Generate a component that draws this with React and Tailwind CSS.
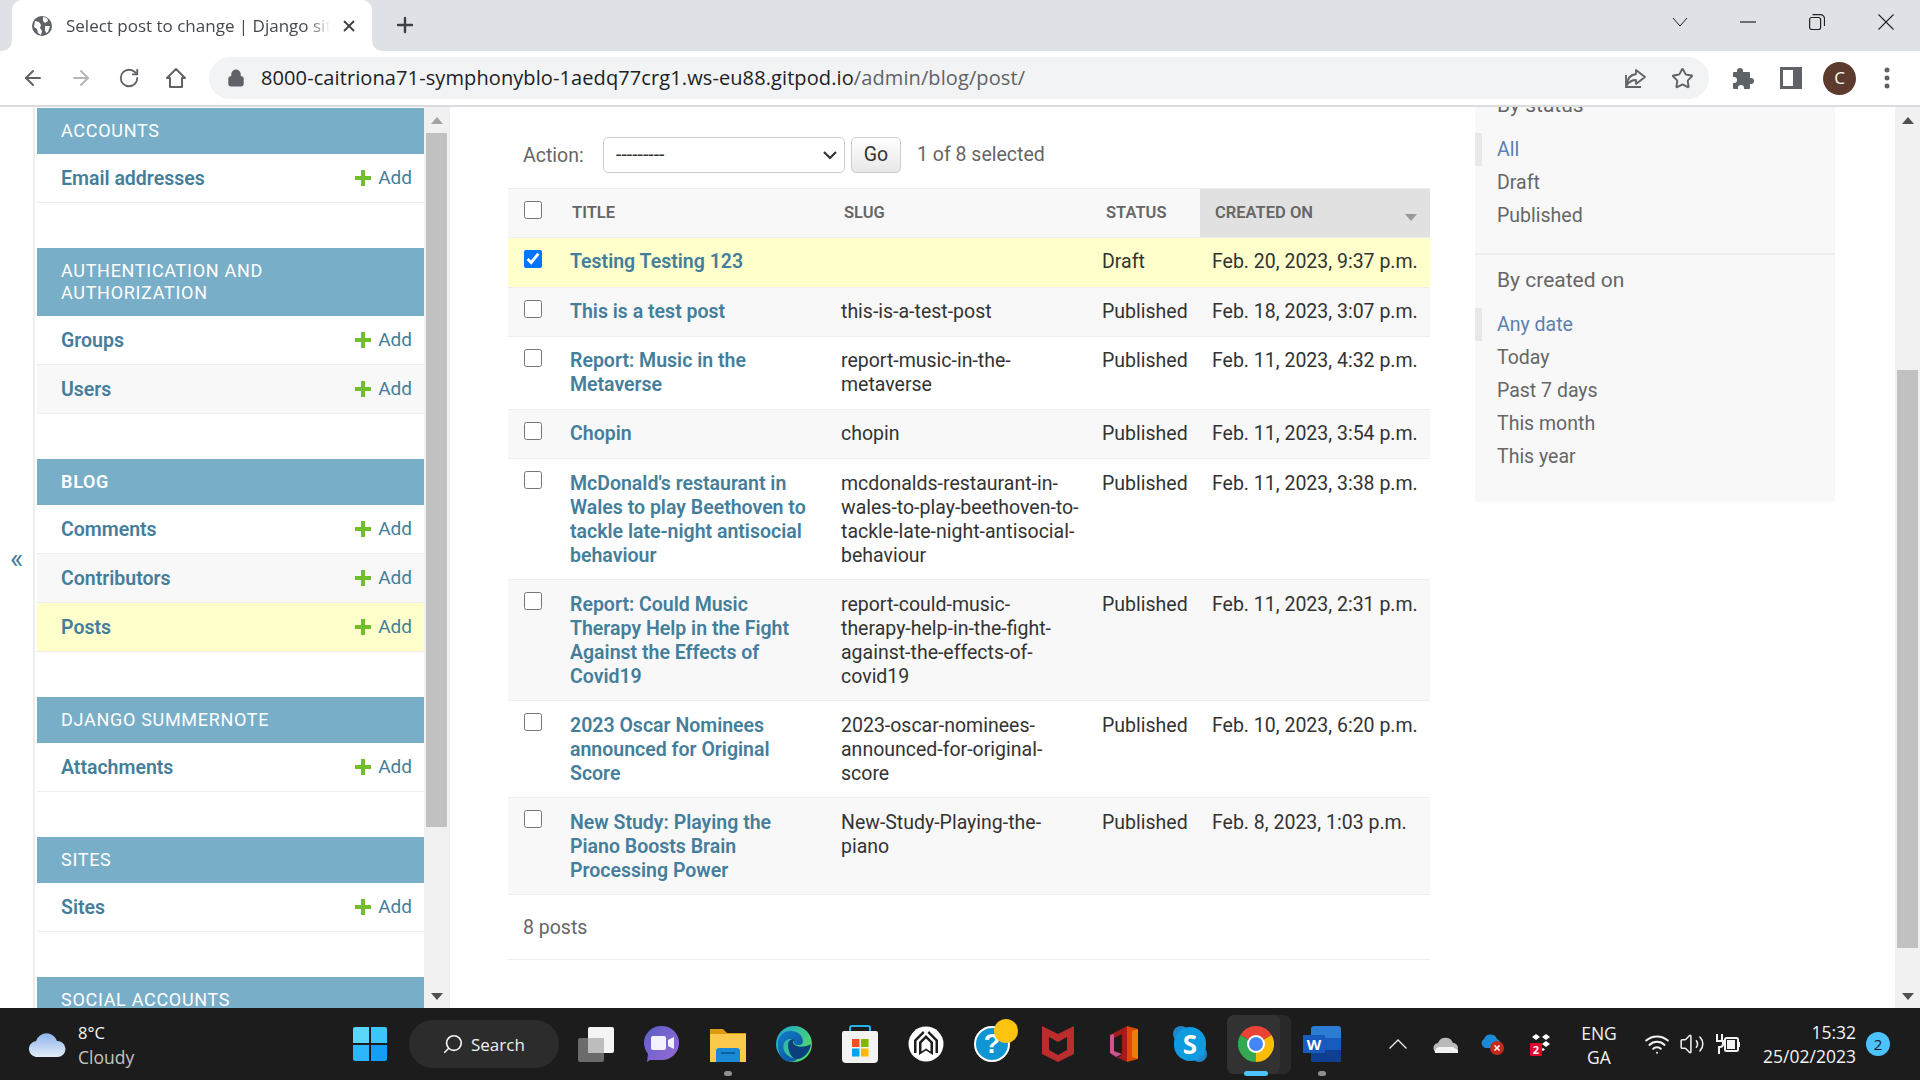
import React from 'react';
import { ArrowLeft, ArrowRight, RotateCw, Lock, Star, Plus, X, Search, Wifi, Volume2 } from 'lucide-react';

const Add = () => (
  <span className="flex items-center gap-[7px] text-[#447e9b] font-normal text-[19px]">
    <svg width="16" height="16" viewBox="0 0 16 16"><path d="M6 0h4v6h6v4h-6v6H6v-6H0V6h6z" fill="#70bf2b" /></svg>
    Add
  </span>
);

const Row = ({ name, bg = 'bg-white' }) => (
  <div className={`${bg} h-[49px] pl-[24px] pr-[12px] flex items-center justify-between border-b border-[#eeeeee] font-semibold text-[#447e9b]`}>
    <span className="pt-[2px]">{name}</span>
    <Add />
  </div>
);

const Mod = ({ title, rows, bold }) => (
  <div className="mb-[45px]">
    <div className={`bg-[#79aec8] text-white px-[24px] py-[12px] leading-[22px] text-[18px] tracking-[0.7px] uppercase ${bold ? 'font-semibold' : 'font-normal'}`}>
      {title.map((t) => <div key={t}>{t}</div>)}
    </div>
    {rows}
  </div>
);

const Tri = ({ up, color }) => (
  <svg width="12" height="7" viewBox="0 0 12 7"><path d={up ? 'M6 0l6 7H0z' : 'M0 0h12L6 7z'} fill={color} /></svg>
);

const posts = [
  { t: ['Testing Testing 123'], s: [''], st: 'Draft', d: 'Feb. 20, 2023, 9:37 p.m.', bg: 'bg-[#ffffcc]', c: true },
  { t: ['This is a test post'], s: ['this-is-a-test-post'], st: 'Published', d: 'Feb. 18, 2023, 3:07 p.m.', bg: 'bg-[#f8f8f8]' },
  { t: ['Report: Music in the', 'Metaverse'], s: ['report-music-in-the-', 'metaverse'], st: 'Published', d: 'Feb. 11, 2023, 4:32 p.m.', bg: 'bg-white' },
  { t: ['Chopin'], s: ['chopin'], st: 'Published', d: 'Feb. 11, 2023, 3:54 p.m.', bg: 'bg-[#f8f8f8]' },
  { t: ["McDonald's restaurant in", 'Wales to play Beethoven to', 'tackle late-night antisocial', 'behaviour'], s: ['mcdonalds-restaurant-in-', 'wales-to-play-beethoven-to-', 'tackle-late-night-antisocial-', 'behaviour'], st: 'Published', d: 'Feb. 11, 2023, 3:38 p.m.', bg: 'bg-white' },
  { t: ['Report: Could Music', 'Therapy Help in the Fight', 'Against the Effects of', 'Covid19'], s: ['report-could-music-', 'therapy-help-in-the-fight-', 'against-the-effects-of-', 'covid19'], st: 'Published', d: 'Feb. 11, 2023, 2:31 p.m.', bg: 'bg-[#f8f8f8]' },
  { t: ['2023 Oscar Nominees', 'announced for Original', 'Score'], s: ['2023-oscar-nominees-', 'announced-for-original-', 'score'], st: 'Published', d: 'Feb. 10, 2023, 6:20 p.m.', bg: 'bg-white' },
  { t: ['New Study: Playing the', 'Piano Boosts Brain', 'Processing Power'], s: ['New-Study-Playing-the-', 'piano'], st: 'Published', d: 'Feb. 8, 2023, 1:03 p.m.', bg: 'bg-[#f8f8f8]' },
];

const Lines = ({ l }) => l.map((x, i) => <div key={i}>{x}</div>);

const Filter = ({ items }) => (
  <div>
    {items.map((x, i) => (
      <div key={x} className={`h-[33px] leading-[33px] pl-[15px] border-l-[7px] ${i === 0 ? 'border-[#e8e8e8] text-[#5b80b2]' : 'border-transparent text-[#666666]'}`}>{x}</div>
    ))}
  </div>
);

const Tile = ({ children, className = '' }) => (
  <div className={`w-[66px] h-[72px] flex items-center justify-center relative shrink-0 ${className}`}>{children}</div>
);

const Dot = ({ blue }) => (
  <span className={`absolute bottom-[4px] left-1/2 -translate-x-1/2 h-[5px] rounded-full ${blue ? 'w-[24px] bg-[#4cc2ff]' : 'w-[8px] bg-[#8e8e8e]'}`} />
);

const WinLogo = () => (
  <svg width="36" height="36" viewBox="0 0 36 36">
    <path d="M1 3a2 2 0 0 1 2-2h14v16H1z" fill="#5cd5fb" /><path d="M19 1h14a2 2 0 0 1 2 2v14H19z" fill="#3dc6fb" />
    <path d="M1 19h16v16H3a2 2 0 0 1-2-2z" fill="#2db5f9" /><path d="M19 19h16v14a2 2 0 0 1-2 2H19z" fill="#129ff5" />
  </svg>
);
const TaskView = () => (
  <svg width="36" height="36" viewBox="0 0 36 36">
    <rect x="0" y="12" width="26" height="24" rx="2" fill="#6b6b6b" />
    <rect x="10" y="1" width="26" height="26" rx="2" fill="#f4f4f4" />
    <rect x="10" y="12" width="16" height="15" fill="#bdbdbd" />
  </svg>
);
const Teams = () => (
  <svg width="36" height="38" viewBox="0 0 36 38">
    <defs><linearGradient id="t1" x1="0" y1="0" x2="1" y2="1"><stop offset="0" stopColor="#5b5fc7" /><stop offset="1" stopColor="#9a6ad6" /></linearGradient></defs>
    <path d="M18 1a17 17 0 0 1 0 34H6l-3 2 1-8A17 17 0 0 1 18 1z" fill="url(#t1)" />
    <rect x="7" y="11" width="15" height="14" rx="2" fill="#f3f1fb" />
    <path d="M24 15l6-3v12l-6-3z" fill="#f3f1fb" />
  </svg>
);
const Folder = () => (
  <svg width="36" height="36" viewBox="0 0 36 36">
    <path d="M0 3h13l4 4h19v6H0z" fill="#d99c0f" />
    <path d="M0 8h36v28H0z" fill="#fcc94a" />
    <path d="M6 36V25a3 3 0 0 1 3-3h18a3 3 0 0 1 3 3v11z" fill="#1b8ad6" />
    <rect x="11" y="26" width="14" height="2" fill="#0d5fa3" />
  </svg>
);
const Edge = () => (
  <svg width="36" height="38" viewBox="0 0 36 38">
    <defs>
      <linearGradient id="e1" x1="0" y1="0" x2="1" y2="0.6"><stop offset="0" stopColor="#1ba4d8" /><stop offset="1" stopColor="#4fd96a" /></linearGradient>
      <linearGradient id="e2" x1="0" y1="0" x2="1" y2="1"><stop offset="0" stopColor="#117ec9" /><stop offset="1" stopColor="#0a4f9a" /></linearGradient>
    </defs>
    <circle cx="18" cy="19" r="18" fill="url(#e1)" />
    <path d="M2 20C1 8 12 4 20 7c7 3 8 10 6 12-3 2-8 1-8-2 0-3-7-5-10 1-3 7 3 15 13 16-2 3-8 3-11 2C5 34 2 28 2 20z" fill="url(#e2)" />
    <path d="M12 20c0-5 5-7 7-5-2 0-3 3 0 5 4 3 11 2 16-1-1 8-7 15-14 15-6 0-9-8-9-14z" fill="#0c3f7e" />
  </svg>
);
const Store = () => (
  <svg width="36" height="38" viewBox="0 0 36 38">
    <path d="M8 8V3a2 2 0 0 1 2-2h16a2 2 0 0 1 2 2v5" fill="none" stroke="#22b4ea" strokeWidth="2" />
    <path d="M2 6h32a2 2 0 0 1 2 2v26a4 4 0 0 1-4 4H4a4 4 0 0 1-4-4V8a2 2 0 0 1 2-2z" fill="#f3f3f3" />
    <rect x="10" y="14" width="7.5" height="8" fill="#f25022" /><rect x="19" y="14" width="7.5" height="8" fill="#7fba00" />
    <rect x="10" y="23.5" width="7.5" height="8" fill="#00a4ef" /><rect x="19" y="23.5" width="7.5" height="8" fill="#ffb900" />
  </svg>
);
const WhiteHouse = () => (
  <svg width="36" height="36" viewBox="0 0 36 36">
    <circle cx="18" cy="18" r="17.5" fill="#fff" />
    <path d="M6 27V14L15 5l1.500 2L8.500 15v12zM30 27V14L21 5l-1.500 2 8 8v12z" fill="#1c1c1c" />
    <path d="M11 29V16l7-7 7 7v13l-7-4.500z" fill="#1c1c1c" />
    <path d="M13.500 25.500V17l4.500-4.500 4.500 4.500v8.500l-4.500-3z" fill="#fff" />
  </svg>
);
const Help = () => (
  <div className="relative w-[36px] h-[36px]">
    <svg width="36" height="36" viewBox="0 0 36 36">
      <circle cx="18" cy="18" r="17" fill="#0f95d3" stroke="#fff" strokeWidth="2" />
    </svg>
    <span className="absolute inset-0 flex items-center justify-center text-white font-bold text-[27px] leading-none font-['Liberation_Sans']">?</span>
    <span className="absolute -top-[7px] left-[20px] w-[24px] h-[24px] rounded-full bg-[#fdc30e]" />
  </div>
);
const McAfee = () => (
  <svg width="32" height="36" viewBox="0 0 32 36">
    <path d="M0 0l16 8 16-8v28l-16 8-16-8z" fill="#b92d2d" />
    <path d="M7 11l9 5 9-5v13l-9 5-9-5z" fill="#1c1c1c" />
  </svg>
);
const Office = () => (
  <svg width="28" height="36" viewBox="0 0 28 36">
    <path d="M17 0l11 3v30l-11 3z" fill="#dc4a07" />
    <path d="M17 0v36L6 31c5 0 6-2 6-4V8L4 12v16L0 27V9z" fill="#a31b1b" />
    <path d="M0 9l4-1v17l8 3-6 3-6-4z" fill="#d85a9a" opacity="0.9" />
    <path d="M22 5l6-2v30l-6-2z" fill="#f2910f" opacity="0.75" />
  </svg>
);
const Skype = () => (
  <div className="relative w-[34px] h-[36px]">
    <span className="absolute left-0 top-0 w-[16px] h-[16px] rounded-full bg-[#1f87c9]" />
    <span className="absolute right-0 bottom-0 w-[16px] h-[16px] rounded-full bg-[#1f87c9]" />
    <div className="absolute inset-[1px] rounded-full bg-[#0f9be0] flex items-center justify-center text-white font-bold text-[26px] leading-none font-['Open_Sans']">S</div>
  </div>
);
const Chrome = () => (
  <svg width="36" height="36" viewBox="0 0 36 36">
    <path d="M18 18L2.4 9A18 18 0 0 1 33.6 9z" fill="#ea4335" />
    <path d="M18 18L33.6 9A18 18 0 0 1 18 36z" fill="#fbbc04" />
    <path d="M18 18L18 36A18 18 0 0 1 2.4 9z" fill="#34a853" />
    <circle cx="18" cy="18" r="9" fill="#fff" /><circle cx="18" cy="18" r="7" fill="#4285f4" />
  </svg>
);
const Word = () => (
  <div className="relative w-[38px] h-[36px]">
    <div className="absolute left-[8px] top-0 w-[30px] h-[36px] rounded-[3px] bg-[#2b7cd3]" />
    <div className="absolute left-[8px] top-[12px] w-[30px] h-[12px] bg-[#185abd]" />
    <div className="absolute left-[8px] top-[24px] w-[30px] h-[12px] rounded-b-[3px] bg-[#103f91]" />
    <div className="absolute left-0 top-[9px] w-[22px] h-[18px] bg-[#185abd] text-white text-[15px] font-bold leading-[18px] text-center font-['Open_Sans']">W</div>
  </div>
);

const Flare = ({ right }) => (
  <svg width="10" height="10" viewBox="0 0 10 10" className={`absolute bottom-0 ${right ? '-right-[10px]' : '-left-[10px]'}`}>
    <path d={right ? 'M0 0A10 10 0 0 0 10 10H0z' : 'M10 0A10 10 0 0 1 0 10H10z'} fill="#ffffff" />
  </svg>
);

export default function App() {
  return (
    <div className="h-screen w-[1920px] overflow-hidden flex flex-col bg-white font-['Roboto',sans-serif] text-[19.5px] text-[#333333]">
      {/* tab strip */}
      <div className="h-[51px] bg-[#dee1e6] flex items-stretch pl-[12px] font-['Open_Sans',sans-serif] shrink-0">
        <div className="w-[360px] bg-white rounded-t-[10px] flex items-center pl-[20px] pr-[14px] relative">
          <Flare /><Flare right />
          <svg width="20" height="20" viewBox="0 0 20 20" className="shrink-0"><circle cx="10" cy="10" r="10" fill="#5f6368" /><path d="M3 5l4 1 2 3-1 3 2 3-1 4-3-2-1-4-3-2zM11 1l4 1 1 3-3 2-2-2zM13 10l5 0-2 6-2 1-1-3z" fill="#ffffff" /></svg>
          <span className="ml-[14px] w-[264px] overflow-hidden whitespace-nowrap text-[17px] text-[#45494d] [mask-image:linear-gradient(90deg,#000_92%,transparent)]">Select post to change | Django site admin</span>
          <X size={18} strokeWidth={2.4} className="ml-auto text-[#3c4043]" />
        </div>
        <Plus size={24} strokeWidth={2.4} className="ml-[21px] mt-[13px] text-[#3c4043]" />
        <div className="flex-1" />
        <svg width="16" height="10" viewBox="0 0 16 10" className="mt-[17px]"><path d="M1 1l7 8 7-8" fill="none" stroke="#222" strokeWidth="1" /></svg>
        <svg width="16" height="2" viewBox="0 0 16 2" className="mt-[21px] ml-[52px]"><path d="M0 1h16" stroke="#222" strokeWidth="1.200" /></svg>
        <svg width="16" height="16" viewBox="0 0 16 16" className="mt-[14px] ml-[53px]"><rect x="0.600" y="3.500" width="11" height="12" rx="2" fill="none" stroke="#222" strokeWidth="1.200" /><path d="M3.500 0.700h8a4 4 0 0 1 4 4V12" fill="none" stroke="#222" strokeWidth="1.200" /></svg>
        <svg width="16" height="16" viewBox="0 0 16 16" className="mt-[14px] ml-[53px] mr-[26px]"><path d="M0.500 0.500l15 15m0-15l-15 15" stroke="#222" strokeWidth="1.100" /></svg>
      </div>
      {/* toolbar */}
      <div className="h-[56px] bg-white border-b-2 border-[#dadce0] flex items-center pl-[21px] shrink-0 font-['Open_Sans',sans-serif] text-[#5f6368]">
        <ArrowLeft size={24} strokeWidth={2} className="text-[#5f6368]" />
        <ArrowRight size={24} strokeWidth={2} className="ml-[24px] text-[#b5b8bb]" />
        <RotateCw size={22} strokeWidth={2} className="ml-[25px]" />
        <svg width="22" height="24" viewBox="0 0 22 24" className="ml-[25px]"><path d="M11 3L2 12h3v9h12v-9h3z" fill="none" stroke="#5f6368" strokeWidth="2" strokeLinejoin="round" /></svg>
        <div className="ml-[22px] w-[1500px] h-[42px] bg-[#f1f3f4] rounded-full flex items-center pl-[18px] pr-[15px]">
          <Lock size={18} strokeWidth={2.6} className="text-[#5f6368] fill-[#5f6368]" />
          <span className="ml-[16px] text-[20px] tracking-[0.1px] whitespace-nowrap text-[#202124]">8000-caitriona71-symphonyblo-1aedq77crg1.ws-eu88.gitpod.io<span className="text-[#5f6368]">/admin/blog/post/</span></span>
          <div className="flex-1" />
          <svg width="24" height="24" viewBox="0 0 24 24" fill="none" stroke="#5f6368" strokeWidth="1.8"><path d="M13 4l9 7-9 7v-4c-5 0-7 2-9 5 0-6 3-10 9-11z" strokeLinejoin="round" /><path d="M3 9v12h15" /></svg>
          <Star size={23} strokeWidth={2} className="ml-[24px] text-[#5f6368]" />
        </div>
        <svg width="24" height="24" viewBox="0 0 24 24" className="ml-[22px]" fill="#5f6368"><path d="M9 2a3 3 0 0 1 3 3v1h6a1 1 0 0 1 1 1v5h1a3 3 0 0 1 0 6h-1v4a1 1 0 0 1-1 1h-5v-1a3 3 0 0 0-6 0v1H3a1 1 0 0 1-1-1v-5h1a3 3 0 0 0 0-6H2V7a1 1 0 0 1 1-1h3V5a3 3 0 0 1 3-3z" /></svg>
        <svg width="22" height="22" viewBox="0 0 22 22" className="ml-[25px]"><rect x="1.500" y="1.500" width="19" height="19" fill="#fff" stroke="#5f6368" strokeWidth="3" /><rect x="13" y="2" width="7" height="18" fill="#5f6368" /></svg>
        <div className="ml-[21px] w-[33px] h-[33px] rounded-full bg-[#5d3a2e] text-white text-[17px] flex items-center justify-center">C</div>
        <svg width="6" height="22" viewBox="0 0 6 22" className="ml-[28px]" fill="#5f6368"><circle cx="3" cy="3" r="2.5" /><circle cx="3" cy="11" r="2.5" /><circle cx="3" cy="19" r="2.5" /></svg>
      </div>
      {/* page */}
      <div className="flex-1 flex overflow-hidden min-h-0">
        <div className="w-[450px] shrink-0 flex border-r border-[#eeeeee]">
          <div className="w-[35px] border-r-2 border-[#eeeeee] flex items-center justify-center text-[#447e9b] text-[28px] pt-[2px] shrink-0">«</div>
          <div className="w-[387px] ml-[2px] pt-px overflow-hidden shrink-0">
            <Mod title={['Accounts']} rows={<Row name="Email addresses" />} />
            <Mod title={['Authentication and', 'Authorization']} rows={<><Row name="Groups" /><Row name="Users" bg="bg-[#f8f8f8]" /></>} />
            <Mod bold title={['Blog']} rows={<><Row name="Comments" /><Row name="Contributors" bg="bg-[#f8f8f8]" /><Row name="Posts" bg="bg-[#ffffcc]" /></>} />
            <Mod title={['Django Summernote']} rows={<Row name="Attachments" />} />
            <Mod title={['Sites']} rows={<Row name="Sites" />} />
            <Mod title={['Social accounts']} rows={null} />
          </div>
          <div className="flex-1 bg-[#f1f1f1] flex flex-col items-center justify-between relative">
            <div className="h-[26px] flex items-center"><Tri up color="#a3a3a3" /></div>
            <div className="absolute top-[26px] left-[2px] right-[2px] h-[694px] bg-[#c1c1c1]" />
            <div className="h-[24px] flex items-center"><Tri color="#505050" /></div>
          </div>
        </div>
        <div className="w-[922px] ml-[58px] shrink-0">
          <div className="h-[81px] pt-[30px] pl-[15px] flex items-start text-[#666666]">
            <span className="leading-[36px] w-[80px] pt-[1px]">Action:</span>
            <div className="relative w-[242px] h-[36px]">
              <select className="appearance-none w-full h-full border border-[#cccccc] rounded-[5px] pl-[12px] bg-white text-[#333333] text-[19.5px]"><option>---------</option></select>
              <svg width="14" height="9" viewBox="0 0 14 9" className="absolute right-[8px] top-[14px] pointer-events-none"><path d="M1 1l6 6 6-6" fill="none" stroke="#333333" strokeWidth="2.2" /></svg>
            </div>
            <button className="ml-[6px] w-[50px] h-[36px] border border-[#cccccc] rounded-[5px] bg-gradient-to-b from-[#ffffff] to-[#e8e8e8] text-[#333333]">Go</button>
            <span className="ml-[16px] leading-[36px]">1 of 8 selected</span>
          </div>
          <table className="w-[922px] border-collapse table-fixed">
            <thead>
              <tr className="h-[49px] bg-[#f8f8f8] border-t border-b border-[#eeeeee] text-[16.5px] font-semibold text-[#666666] text-left uppercase">
                <th className="w-[52px] align-top pt-[12px] pl-[16px] font-semibold"><input type="checkbox" className="w-[18px] h-[18px] block" /></th>
                <th className="w-[271px] pl-[12px] font-semibold">Title</th>
                <th className="w-[261px] pl-[13px] font-semibold">Slug</th>
                <th className="w-[108px] pl-[14px] font-semibold">Status</th>
                <th className="w-[230px] pl-[15px] font-semibold bg-[#e1e1e1] relative">Created on<span className="absolute right-[13px] top-[25px]"><Tri color="#999999" /></span></th>
              </tr>
            </thead>
            <tbody className="leading-[24px]">
              {posts.map((p, i) => {
                const pad = i === 0 ? 'pt-[12px] pb-[13px]' : i >= 4 ? 'pt-[13px] pb-[11px]' : 'py-[12px]';
                return (
                  <tr key={i} className={`${p.bg} border-b border-[#eeeeee]`}>
                    <td className="align-top pt-[12px] pl-[16px]"><input type="checkbox" defaultChecked={!!p.c} className="w-[18px] h-[18px] block accent-[#0075ff]" /></td>
                    <td className={`align-top ${pad} pl-[10px] font-semibold text-[#447e9b] whitespace-nowrap`}><Lines l={p.t} /></td>
                    <td className={`align-top ${pad} pl-[10px] text-[#333333] whitespace-nowrap`}><Lines l={p.s} /></td>
                    <td className={`align-top ${pad} pl-[10px] whitespace-nowrap`}>{p.st}</td>
                    <td className={`align-top ${pad} pl-[12px] whitespace-nowrap`}>{p.d}</td>
                  </tr>
                );
              })}
            </tbody>
          </table>
          <div className="h-[65px] pl-[15px] pt-[1px] flex items-center border-b border-[#eeeeee] text-[#666666]">8 posts</div>
        </div>
        <div className="w-[360px] ml-[45px] shrink-0 self-start bg-[#f8f8f8] -mt-[14px] text-[#666666] leading-[24px]">
          <div className="pl-[22px] mb-[16px] text-[21px]">By status</div>
          <Filter items={['All', 'Draft', 'Published']} />
          <div className="h-[21px] border-b-2 border-[#eeeeee] box-content" />
          <div className="pl-[22px] mt-[13px] mb-[16px] text-[21px]">By created on</div>
          <Filter items={['Any date', 'Today', 'Past 7 days', 'This month', 'This year']} />
          <div className="h-[29px]" />
        </div>
        <div className="flex-1" />
        <div className="w-[25px] bg-[#f1f1f1] shrink-0 flex flex-col items-center justify-between relative">
          <div className="h-[26px] flex items-center"><Tri up color="#505050" /></div>
          <div className="absolute top-[263px] left-[2px] right-[2px] h-[578px] bg-[#c1c1c1]" />
          <div className="h-[24px] flex items-center"><Tri color="#505050" /></div>
        </div>
      </div>
      {/* taskbar */}
      <div className="h-[72px] bg-[#1c1c1c] flex items-center shrink-0 text-white font-['Open_Sans',sans-serif] overflow-hidden">
        <svg width="38" height="26" viewBox="0 0 38 26" className="ml-[29px] shrink-0">
          <defs><linearGradient id="c1" x1="0" y1="0" x2="0" y2="1"><stop offset="0" stopColor="#8db4ec" /><stop offset="1" stopColor="#e4ecf8" /></linearGradient></defs>
          <path d="M9 26a8 8 0 0 1-2-16 11 11 0 0 1 21 0 8 8 0 0 1 1 16z" fill="url(#c1)" />
        </svg>
        <div className="ml-[11px] w-[60px] text-[16.5px] leading-[24px] shrink-0 pt-[2px]">
          <div className="text-[#f4f4f4]">8°C</div>
          <div className="text-[#c4c4c4] text-[17.5px]">Cloudy</div>
        </div>
        <Tile className="ml-[199px]"><WinLogo /></Tile>
        <div className="ml-[6px] w-[150px] h-[48px] rounded-full bg-[#2c2c2c] flex items-center pl-[33px] shrink-0">
          <Search size={22} strokeWidth={1.8} className="-scale-x-100 text-[#f4f4f4]" />
          <span className="ml-[7px] text-[17px] text-[#f0f0f0] pt-[1px]">Search</span>
        </div>
        <Tile className="ml-[4px]"><TaskView /></Tile>
        <Tile><Teams /></Tile>
        <Tile><Folder /><Dot /></Tile>
        <Tile><Edge /></Tile>
        <Tile><Store /></Tile>
        <Tile><WhiteHouse /></Tile>
        <Tile><Help /></Tile>
        <Tile><McAfee /></Tile>
        <Tile><Office /></Tile>
        <Tile><Skype /></Tile>
        <Tile>
          <span className="absolute left-[8px] top-[7px] w-[60px] h-[59px] rounded-[7px] bg-[#292929]" />
          <span className="absolute left-[4px] top-[7px] w-[53px] h-[59px] rounded-[7px] bg-[#323232]" />
          <span className="relative"><Chrome /></span><Dot blue />
        </Tile>
        <Tile><Word /><Dot /></Tile>
        <svg width="18" height="10" viewBox="0 0 18 10" className="ml-[34px] shrink-0"><path d="M0.500 9.500L9 1l8.500 8.500" fill="none" stroke="#eeeeee" strokeWidth="1.300" /></svg>
        <svg width="26" height="18" viewBox="0 0 26 18" className="ml-[26px] shrink-0"><path d="M6 18a5 5 0 0 1-1-10 8 8 0 0 1 15 0 5 5 0 0 1 0 10z" fill="#b9b9b9" /><path d="M2 18a5 5 0 0 1 6-6h12l5 3v3z" fill="#f2f2f2" /></svg>
        <svg width="28" height="24" viewBox="0 0 28 24" className="ml-[21px] shrink-0"><path d="M5 16a5 5 0 0 1-1-9 7 7 0 0 1 13 0 5 5 0 0 1 1 9z" fill="#1b8ad6" /><circle cx="17" cy="16" r="7" fill="#c42b1c" /><path d="M14.500 13.500l5 5m0-5l-5 5" stroke="#fff" strokeWidth="1.6" /></svg>
        <div className="relative ml-[21px] w-[24px] h-[26px] shrink-0">
          <svg width="24" height="26" viewBox="0 0 24 26"><path d="M7 3l4 3-4 3-4-3zM17 3l4 3-4 3-4-3zM17 10l4 3-4 3-4-3zM14 17l2 1.500-2 1.500-2-1.500z" fill="#fff" /><rect x="1" y="12" width="12" height="13" rx="1" fill="#e2042c" /></svg>
          <span className="absolute left-[1px] top-[12px] w-[12px] h-[13px] text-[11px] font-bold leading-[13px] text-center text-white">2</span>
        </div>
        <div className="ml-[24px] w-[44px] text-center text-[17.5px] leading-[24px] shrink-0 text-[#f2f2f2] pt-[2px]"><div>ENG</div><div>GA</div></div>
        <Wifi size={26} strokeWidth={1.8} className="ml-[23px] text-[#f2f2f2] shrink-0" />
        <Volume2 size={26} strokeWidth={1.4} className="ml-[9px] text-[#f2f2f2] shrink-0" />
        <svg width="26" height="24" viewBox="0 0 26 24" className="ml-[10px] shrink-0" fill="none" stroke="#f2f2f2" strokeWidth="2"><path d="M2 2v7M7 2v7M1 9h7v3a3 3 0 0 1-3 3h-1v7" /><rect x="10" y="6" width="13" height="13" rx="1.5" /><rect x="12" y="8" width="8" height="9" fill="#f2f2f2" stroke="none" /><path d="M24 10v5" /></svg>
        <div className="ml-[14px] w-[101px] text-right text-[17.5px] leading-[24px] shrink-0 text-[#f2f2f2]"><div>15:32</div><div className="whitespace-nowrap">25/02/2023</div></div>
        <div className="ml-[10px] w-[24px] h-[24px] rounded-full bg-[#4cc2ff] text-[#1c1c1c] text-[15px] flex items-center justify-center shrink-0">2</div>
      </div>
    </div>
  );
}
